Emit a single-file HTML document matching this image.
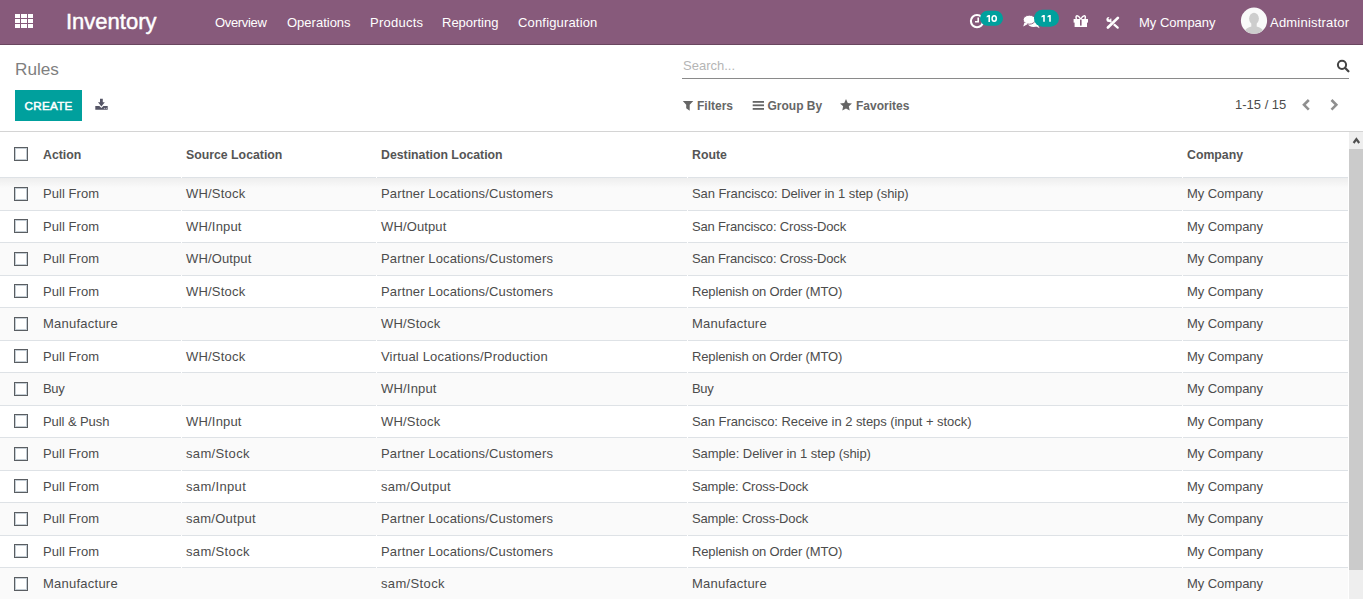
<!DOCTYPE html>
<html><head><meta charset="utf-8">
<style>
*{box-sizing:border-box;margin:0;padding:0}
html,body{width:1363px;height:599px;overflow:hidden;background:#fff}
body{font-family:"Liberation Sans",sans-serif;font-size:13px;color:#4c4c4c;position:relative}
.tx{position:absolute;white-space:nowrap;line-height:1}
.r{position:absolute}
svg{position:absolute;left:0;top:0;overflow:visible}
</style></head><body>
<div class="r" style="left:0;top:0;width:1363px;height:44px;background:#875A7B"></div>
<div class="r" style="left:0;top:44px;width:1363px;height:1px;background:#69465f"></div>
<div class="r" style="left:15px;top:14px;width:5px;height:4px;background:#fff"></div>
<div class="r" style="left:21px;top:14px;width:6px;height:4px;background:#fff"></div>
<div class="r" style="left:28px;top:14px;width:5px;height:4px;background:#fff"></div>
<div class="r" style="left:15px;top:19px;width:5px;height:4px;background:#fff"></div>
<div class="r" style="left:21px;top:19px;width:6px;height:4px;background:#fff"></div>
<div class="r" style="left:28px;top:19px;width:5px;height:4px;background:#fff"></div>
<div class="r" style="left:15px;top:24px;width:5px;height:4px;background:#fff"></div>
<div class="r" style="left:21px;top:24px;width:6px;height:4px;background:#fff"></div>
<div class="r" style="left:28px;top:24px;width:5px;height:4px;background:#fff"></div>
<div class="tx" style="left:66px;top:10.98px;font-size:22px;color:#fff;-webkit-text-stroke:0.45px #fff;">Inventory</div>
<div class="tx" style="left:215px;top:15.80px;font-size:13px;color:#fff;letter-spacing:-0.343px;">Overview</div>
<div class="tx" style="left:287px;top:15.80px;font-size:13px;color:#fff;letter-spacing:0.000px;">Operations</div>
<div class="tx" style="left:370px;top:15.80px;font-size:13px;color:#fff;letter-spacing:0.257px;">Products</div>
<div class="tx" style="left:442px;top:15.80px;font-size:13px;color:#fff;letter-spacing:0.000px;">Reporting</div>
<div class="tx" style="left:518px;top:15.80px;font-size:13px;color:#fff;letter-spacing:0.167px;">Configuration</div>
<div class="tx" style="left:1139px;top:15.80px;font-size:13px;color:#fff;">My Company</div>
<div class="tx" style="left:1270px;top:15.80px;font-size:13px;color:#fff;letter-spacing:0.208px;">Administrator</div>
<svg width="1363" height="599"><circle cx="977" cy="21.1" r="6.1" fill="none" stroke="#fff" stroke-width="2.1"/><path d="M975,21.8 H978.2 V17.4" fill="none" stroke="#fff" stroke-width="1.6"/><rect x="980" y="10.8" width="23" height="15" rx="7.5" fill="#00A09D"/><ellipse cx="1033.6" cy="23.4" rx="5.6" ry="3.7" fill="#fff"/><path d="M1035.2,25.8 L1039.6,28.3 L1037.8,24.6 Z" fill="#fff"/><path d="M1024.6,22.2 L1023.2,26.6 L1028.4,23.8 Z" fill="#fff"/><ellipse cx="1029.3" cy="19.7" rx="6.1" ry="4.5" fill="#fff" stroke="#875A7B" stroke-width="0.9"/><path d="M1024.9,22.6 L1023.9,25.8 L1027.8,23.6 Z" fill="#fff"/><rect x="1034" y="9.8" width="25" height="17" rx="8.5" fill="#00A09D"/><rect x="1073.6" y="19" width="14.4" height="3.6" fill="#fff"/><rect x="1074.6" y="22" width="12.4" height="5" fill="#fff"/><path d="M1080.6,19 C1078,14.2 1075,15 1076.4,19 M1080.8,19 C1083.4,14.2 1086.4,15 1085,19" fill="none" stroke="#fff" stroke-width="1.5"/><rect x="1080" y="19.6" width="1.6" height="6" fill="#875A7B"/><path d="M1110.2,21.2 L1117.7,27.7" stroke="#fff" stroke-width="2.2" stroke-linecap="round"/><circle cx="1108.9" cy="19.5" r="2.5" fill="#fff"/><circle cx="1109.5" cy="18.5" r="1.05" fill="#875A7B"/><circle cx="1110.3" cy="17.4" r="1.1" fill="#875A7B"/><path d="M1109.5,26 L1116.5,19.3" stroke="#875A7B" stroke-width="3.6"/><path d="M1107.9,27.5 L1117.9,17.9" stroke="#fff" stroke-width="2.7" stroke-linecap="round"/><circle cx="1254" cy="20.7" r="13.1" fill="#f9f9f9"/><defs><clipPath id="av"><circle cx="1254" cy="20.7" r="13.1"/></clipPath></defs><g clip-path="url(#av)"><ellipse cx="1254" cy="18.6" rx="4.9" ry="5.9" fill="#cdcdcd"/><rect x="1251.3" y="22" width="5.4" height="5" fill="#cdcdcd"/><path d="M1243,36 C1244,28 1249,26.4 1254,26.4 C1259,26.4 1264,28 1265,36 Z" fill="#cdcdcd"/></g><path d="M100,98.8 H102.8 V102.2 H104.8 L101.4,106.6 L98,102.2 H100 Z" fill="#555566"/><path d="M95.3,105.9 H99.4 L101.4,108 L103.4,105.9 H107.7 V109.7 H95.3 Z" fill="#555566"/><circle cx="104.4" cy="108.3" r="0.6" fill="#c8c8d0"/><circle cx="106.3" cy="108.3" r="0.6" fill="#c8c8d0"/><circle cx="1342" cy="64.8" r="4.1" fill="none" stroke="#444" stroke-width="2"/><path d="M1345.2,68 L1348.4,71.2" stroke="#444" stroke-width="2.3" stroke-linecap="round"/><path d="M682.8,101 L693.3,101 L689.7,104.7 L689.7,110.7 L686.2,108.3 L686.2,104.7 Z" fill="#666"/><rect x="752.7" y="101" width="11.3" height="1.8" fill="#666"/><rect x="752.7" y="104.4" width="11.3" height="1.8" fill="#666"/><rect x="752.7" y="108" width="11.3" height="1.8" fill="#666"/><polygon points="846.00,99.10 847.76,102.97 851.99,103.45 848.85,106.33 849.70,110.50 846.00,108.40 842.30,110.50 843.15,106.33 840.01,103.45 844.24,102.97" fill="#666"/><path d="M1308.8,100 L1304,104.85 L1308.8,109.7" fill="none" stroke="#8f8f8f" stroke-width="2.6"/><path d="M1331.5,100 L1336.3,104.85 L1331.5,109.7" fill="none" stroke="#8f8f8f" stroke-width="2.6"/></svg>
<svg width="1363" height="599"><path d="M988.4,15 h1.6 v7 h-1.6 Z M988.4,15 L986.6999999999999,16.1 v1.3 L988.4,16.7 Z" fill="#fff"/><ellipse cx="994.2" cy="18.5" rx="2.1" ry="2.8" fill="none" stroke="#fff" stroke-width="1.55"/><path d="M1043.2,15 h1.6 v6.800000000000001 h-1.6 Z M1043.2,15 L1041.5,16.1 v1.3 L1043.2,16.7 Z" fill="#fff"/><path d="M1049.2,15 h1.6 v6.800000000000001 h-1.6 Z M1049.2,15 L1047.5,16.1 v1.3 L1049.2,16.7 Z" fill="#fff"/></svg>
<div class="tx" style="left:15px;top:60.74px;font-size:17.2px;color:#7f7f7f;">Rules</div>
<div class="r" style="left:682px;top:78px;width:667px;height:1px;background:#8a8a8a"></div>
<div class="tx" style="left:683px;top:59.00px;font-size:13px;color:#b5b5b5;">Search...</div>
<div class="r" style="left:15px;top:90px;width:67px;height:31px;background:#00A09D"></div>
<div class="tx" style="left:15px;width:67px;text-align:center;top:100.10px;font-size:11.7px;letter-spacing:0.25px;text-indent:0.25px;-webkit-text-stroke:0.5px #fff;color:#fff">CREATE</div>
<div class="tx" style="left:697px;top:99.64px;font-size:12px;color:#666;font-weight:bold;">Filters</div>
<div class="tx" style="left:767.5px;top:99.64px;font-size:12px;color:#666;font-weight:bold;">Group By</div>
<div class="tx" style="left:856px;top:99.64px;font-size:12px;color:#666;font-weight:bold;">Favorites</div>
<div class="tx" style="left:1235px;top:98.30px;font-size:13px;color:#4c4c4c;">1-15 / 15</div>
<div class="r" style="left:0;top:131px;width:1363px;height:1px;background:#d4d4d4"></div>
<div class="r" style="left:14px;top:147px;width:14px;height:14px;border:1.5px solid #5a5e62;box-shadow:inset 0 0 0 1px #c5ced5;background:#fff"></div>
<div class="tx" style="left:43px;top:149.39px;font-size:12.3px;color:#555;font-weight:bold;">Action</div>
<div class="tx" style="left:186px;top:149.39px;font-size:12.3px;color:#555;font-weight:bold;">Source Location</div>
<div class="tx" style="left:381px;top:149.39px;font-size:12.3px;color:#555;font-weight:bold;">Destination Location</div>
<div class="tx" style="left:692px;top:149.39px;font-size:12.3px;color:#555;font-weight:bold;">Route</div>
<div class="tx" style="left:1187px;top:149.39px;font-size:12.3px;color:#555;font-weight:bold;">Company</div>
<div class="r" style="left:0;top:178px;width:1348px;height:32px;background:#fafafa"></div>
<div class="r" style="left:0;top:178px;width:1348px;height:10px;background:linear-gradient(#eeeeee,#fafafa)"></div>
<div class="r" style="left:0;top:177px;width:1348px;height:1px;background:#dee2e6"></div>
<div class="r" style="left:181px;top:177px;width:1px;height:1px;background:#fff"></div>
<div class="r" style="left:376px;top:177px;width:1px;height:1px;background:#fff"></div>
<div class="r" style="left:687px;top:177px;width:1px;height:1px;background:#fff"></div>
<div class="r" style="left:1182px;top:177px;width:1px;height:1px;background:#fff"></div>
<div class="r" style="left:14px;top:187px;width:14px;height:14px;border:1.5px solid #5a5e62;box-shadow:inset 0 0 0 1px #c5ced5;background:#fff"></div>
<div class="tx" style="left:43px;top:186.80px;font-size:13px;letter-spacing:0.062px;">Pull From</div>
<div class="tx" style="left:186px;top:186.80px;font-size:13px;letter-spacing:0.200px;">WH/Stock</div>
<div class="tx" style="left:381px;top:186.80px;font-size:13px;letter-spacing:0.138px;">Partner Locations/Customers</div>
<div class="tx" style="left:692px;top:186.80px;font-size:13px;letter-spacing:-0.079px;">San Francisco: Deliver in 1 step (ship)</div>
<div class="tx" style="left:1187px;top:186.80px;font-size:13px;letter-spacing:-0.067px;">My Company</div>
<div class="r" style="left:0;top:210px;width:1348px;height:1px;background:#dee2e6"></div>
<div class="r" style="left:181px;top:210px;width:1px;height:1px;background:#fff"></div>
<div class="r" style="left:376px;top:210px;width:1px;height:1px;background:#fff"></div>
<div class="r" style="left:687px;top:210px;width:1px;height:1px;background:#fff"></div>
<div class="r" style="left:1182px;top:210px;width:1px;height:1px;background:#fff"></div>
<div class="r" style="left:14px;top:219px;width:14px;height:14px;border:1.5px solid #5a5e62;box-shadow:inset 0 0 0 1px #c5ced5;background:#fff"></div>
<div class="tx" style="left:43px;top:219.80px;font-size:13px;letter-spacing:0.062px;">Pull From</div>
<div class="tx" style="left:186px;top:219.80px;font-size:13px;letter-spacing:0.186px;">WH/Input</div>
<div class="tx" style="left:381px;top:219.80px;font-size:13px;letter-spacing:0.125px;">WH/Output</div>
<div class="tx" style="left:692px;top:219.80px;font-size:13px;letter-spacing:-0.167px;">San Francisco: Cross-Dock</div>
<div class="tx" style="left:1187px;top:219.80px;font-size:13px;letter-spacing:-0.067px;">My Company</div>
<div class="r" style="left:0;top:243px;width:1348px;height:32px;background:#fafafa"></div>
<div class="r" style="left:0;top:242px;width:1348px;height:1px;background:#dee2e6"></div>
<div class="r" style="left:181px;top:242px;width:1px;height:1px;background:#fff"></div>
<div class="r" style="left:376px;top:242px;width:1px;height:1px;background:#fff"></div>
<div class="r" style="left:687px;top:242px;width:1px;height:1px;background:#fff"></div>
<div class="r" style="left:1182px;top:242px;width:1px;height:1px;background:#fff"></div>
<div class="r" style="left:14px;top:252px;width:14px;height:14px;border:1.5px solid #5a5e62;box-shadow:inset 0 0 0 1px #c5ced5;background:#fff"></div>
<div class="tx" style="left:43px;top:251.80px;font-size:13px;letter-spacing:0.062px;">Pull From</div>
<div class="tx" style="left:186px;top:251.80px;font-size:13px;letter-spacing:0.125px;">WH/Output</div>
<div class="tx" style="left:381px;top:251.80px;font-size:13px;letter-spacing:0.138px;">Partner Locations/Customers</div>
<div class="tx" style="left:692px;top:251.80px;font-size:13px;letter-spacing:-0.167px;">San Francisco: Cross-Dock</div>
<div class="tx" style="left:1187px;top:251.80px;font-size:13px;letter-spacing:-0.067px;">My Company</div>
<div class="r" style="left:0;top:275px;width:1348px;height:1px;background:#dee2e6"></div>
<div class="r" style="left:181px;top:275px;width:1px;height:1px;background:#fff"></div>
<div class="r" style="left:376px;top:275px;width:1px;height:1px;background:#fff"></div>
<div class="r" style="left:687px;top:275px;width:1px;height:1px;background:#fff"></div>
<div class="r" style="left:1182px;top:275px;width:1px;height:1px;background:#fff"></div>
<div class="r" style="left:14px;top:284px;width:14px;height:14px;border:1.5px solid #5a5e62;box-shadow:inset 0 0 0 1px #c5ced5;background:#fff"></div>
<div class="tx" style="left:43px;top:284.80px;font-size:13px;letter-spacing:0.062px;">Pull From</div>
<div class="tx" style="left:186px;top:284.80px;font-size:13px;letter-spacing:0.200px;">WH/Stock</div>
<div class="tx" style="left:381px;top:284.80px;font-size:13px;letter-spacing:0.138px;">Partner Locations/Customers</div>
<div class="tx" style="left:692px;top:284.80px;font-size:13px;letter-spacing:-0.148px;">Replenish on Order (MTO)</div>
<div class="tx" style="left:1187px;top:284.80px;font-size:13px;letter-spacing:-0.067px;">My Company</div>
<div class="r" style="left:0;top:308px;width:1348px;height:32px;background:#fafafa"></div>
<div class="r" style="left:0;top:307px;width:1348px;height:1px;background:#dee2e6"></div>
<div class="r" style="left:181px;top:307px;width:1px;height:1px;background:#fff"></div>
<div class="r" style="left:376px;top:307px;width:1px;height:1px;background:#fff"></div>
<div class="r" style="left:687px;top:307px;width:1px;height:1px;background:#fff"></div>
<div class="r" style="left:1182px;top:307px;width:1px;height:1px;background:#fff"></div>
<div class="r" style="left:14px;top:317px;width:14px;height:14px;border:1.5px solid #5a5e62;box-shadow:inset 0 0 0 1px #c5ced5;background:#fff"></div>
<div class="tx" style="left:43px;top:316.80px;font-size:13px;letter-spacing:0.240px;">Manufacture</div>
<div class="tx" style="left:381px;top:316.80px;font-size:13px;letter-spacing:0.200px;">WH/Stock</div>
<div class="tx" style="left:692px;top:316.80px;font-size:13px;letter-spacing:0.240px;">Manufacture</div>
<div class="tx" style="left:1187px;top:316.80px;font-size:13px;letter-spacing:-0.067px;">My Company</div>
<div class="r" style="left:0;top:340px;width:1348px;height:1px;background:#dee2e6"></div>
<div class="r" style="left:181px;top:340px;width:1px;height:1px;background:#fff"></div>
<div class="r" style="left:376px;top:340px;width:1px;height:1px;background:#fff"></div>
<div class="r" style="left:687px;top:340px;width:1px;height:1px;background:#fff"></div>
<div class="r" style="left:1182px;top:340px;width:1px;height:1px;background:#fff"></div>
<div class="r" style="left:14px;top:349px;width:14px;height:14px;border:1.5px solid #5a5e62;box-shadow:inset 0 0 0 1px #c5ced5;background:#fff"></div>
<div class="tx" style="left:43px;top:349.80px;font-size:13px;letter-spacing:0.062px;">Pull From</div>
<div class="tx" style="left:186px;top:349.80px;font-size:13px;letter-spacing:0.200px;">WH/Stock</div>
<div class="tx" style="left:381px;top:349.80px;font-size:13px;letter-spacing:0.185px;">Virtual Locations/Production</div>
<div class="tx" style="left:692px;top:349.80px;font-size:13px;letter-spacing:-0.148px;">Replenish on Order (MTO)</div>
<div class="tx" style="left:1187px;top:349.80px;font-size:13px;letter-spacing:-0.067px;">My Company</div>
<div class="r" style="left:0;top:373px;width:1348px;height:32px;background:#fafafa"></div>
<div class="r" style="left:0;top:372px;width:1348px;height:1px;background:#dee2e6"></div>
<div class="r" style="left:181px;top:372px;width:1px;height:1px;background:#fff"></div>
<div class="r" style="left:376px;top:372px;width:1px;height:1px;background:#fff"></div>
<div class="r" style="left:687px;top:372px;width:1px;height:1px;background:#fff"></div>
<div class="r" style="left:1182px;top:372px;width:1px;height:1px;background:#fff"></div>
<div class="r" style="left:14px;top:382px;width:14px;height:14px;border:1.5px solid #5a5e62;box-shadow:inset 0 0 0 1px #c5ced5;background:#fff"></div>
<div class="tx" style="left:43px;top:381.80px;font-size:13px;letter-spacing:-0.350px;">Buy</div>
<div class="tx" style="left:381px;top:381.80px;font-size:13px;letter-spacing:0.186px;">WH/Input</div>
<div class="tx" style="left:692px;top:381.80px;font-size:13px;letter-spacing:-0.350px;">Buy</div>
<div class="tx" style="left:1187px;top:381.80px;font-size:13px;letter-spacing:-0.067px;">My Company</div>
<div class="r" style="left:0;top:405px;width:1348px;height:1px;background:#dee2e6"></div>
<div class="r" style="left:181px;top:405px;width:1px;height:1px;background:#fff"></div>
<div class="r" style="left:376px;top:405px;width:1px;height:1px;background:#fff"></div>
<div class="r" style="left:687px;top:405px;width:1px;height:1px;background:#fff"></div>
<div class="r" style="left:1182px;top:405px;width:1px;height:1px;background:#fff"></div>
<div class="r" style="left:14px;top:414px;width:14px;height:14px;border:1.5px solid #5a5e62;box-shadow:inset 0 0 0 1px #c5ced5;background:#fff"></div>
<div class="tx" style="left:43px;top:414.80px;font-size:13px;letter-spacing:-0.080px;">Pull &amp; Push</div>
<div class="tx" style="left:186px;top:414.80px;font-size:13px;letter-spacing:0.186px;">WH/Input</div>
<div class="tx" style="left:381px;top:414.80px;font-size:13px;letter-spacing:0.200px;">WH/Stock</div>
<div class="tx" style="left:692px;top:414.80px;font-size:13px;letter-spacing:-0.056px;">San Francisco: Receive in 2 steps (input + stock)</div>
<div class="tx" style="left:1187px;top:414.80px;font-size:13px;letter-spacing:-0.067px;">My Company</div>
<div class="r" style="left:0;top:438px;width:1348px;height:32px;background:#fafafa"></div>
<div class="r" style="left:0;top:437px;width:1348px;height:1px;background:#dee2e6"></div>
<div class="r" style="left:181px;top:437px;width:1px;height:1px;background:#fff"></div>
<div class="r" style="left:376px;top:437px;width:1px;height:1px;background:#fff"></div>
<div class="r" style="left:687px;top:437px;width:1px;height:1px;background:#fff"></div>
<div class="r" style="left:1182px;top:437px;width:1px;height:1px;background:#fff"></div>
<div class="r" style="left:14px;top:447px;width:14px;height:14px;border:1.5px solid #5a5e62;box-shadow:inset 0 0 0 1px #c5ced5;background:#fff"></div>
<div class="tx" style="left:43px;top:446.80px;font-size:13px;letter-spacing:0.062px;">Pull From</div>
<div class="tx" style="left:186px;top:446.80px;font-size:13px;letter-spacing:0.350px;">sam/Stock</div>
<div class="tx" style="left:381px;top:446.80px;font-size:13px;letter-spacing:0.138px;">Partner Locations/Customers</div>
<div class="tx" style="left:692px;top:446.80px;font-size:13px;letter-spacing:-0.055px;">Sample: Deliver in 1 step (ship)</div>
<div class="tx" style="left:1187px;top:446.80px;font-size:13px;letter-spacing:-0.067px;">My Company</div>
<div class="r" style="left:0;top:470px;width:1348px;height:1px;background:#dee2e6"></div>
<div class="r" style="left:181px;top:470px;width:1px;height:1px;background:#fff"></div>
<div class="r" style="left:376px;top:470px;width:1px;height:1px;background:#fff"></div>
<div class="r" style="left:687px;top:470px;width:1px;height:1px;background:#fff"></div>
<div class="r" style="left:1182px;top:470px;width:1px;height:1px;background:#fff"></div>
<div class="r" style="left:14px;top:479px;width:14px;height:14px;border:1.5px solid #5a5e62;box-shadow:inset 0 0 0 1px #c5ced5;background:#fff"></div>
<div class="tx" style="left:43px;top:479.80px;font-size:13px;letter-spacing:0.062px;">Pull From</div>
<div class="tx" style="left:186px;top:479.80px;font-size:13px;letter-spacing:0.338px;">sam/Input</div>
<div class="tx" style="left:381px;top:479.80px;font-size:13px;letter-spacing:0.256px;">sam/Output</div>
<div class="tx" style="left:692px;top:479.80px;font-size:13px;letter-spacing:-0.176px;">Sample: Cross-Dock</div>
<div class="tx" style="left:1187px;top:479.80px;font-size:13px;letter-spacing:-0.067px;">My Company</div>
<div class="r" style="left:0;top:503px;width:1348px;height:32px;background:#fafafa"></div>
<div class="r" style="left:0;top:502px;width:1348px;height:1px;background:#dee2e6"></div>
<div class="r" style="left:181px;top:502px;width:1px;height:1px;background:#fff"></div>
<div class="r" style="left:376px;top:502px;width:1px;height:1px;background:#fff"></div>
<div class="r" style="left:687px;top:502px;width:1px;height:1px;background:#fff"></div>
<div class="r" style="left:1182px;top:502px;width:1px;height:1px;background:#fff"></div>
<div class="r" style="left:14px;top:512px;width:14px;height:14px;border:1.5px solid #5a5e62;box-shadow:inset 0 0 0 1px #c5ced5;background:#fff"></div>
<div class="tx" style="left:43px;top:511.80px;font-size:13px;letter-spacing:0.062px;">Pull From</div>
<div class="tx" style="left:186px;top:511.80px;font-size:13px;letter-spacing:0.256px;">sam/Output</div>
<div class="tx" style="left:381px;top:511.80px;font-size:13px;letter-spacing:0.138px;">Partner Locations/Customers</div>
<div class="tx" style="left:692px;top:511.80px;font-size:13px;letter-spacing:-0.176px;">Sample: Cross-Dock</div>
<div class="tx" style="left:1187px;top:511.80px;font-size:13px;letter-spacing:-0.067px;">My Company</div>
<div class="r" style="left:0;top:535px;width:1348px;height:1px;background:#dee2e6"></div>
<div class="r" style="left:181px;top:535px;width:1px;height:1px;background:#fff"></div>
<div class="r" style="left:376px;top:535px;width:1px;height:1px;background:#fff"></div>
<div class="r" style="left:687px;top:535px;width:1px;height:1px;background:#fff"></div>
<div class="r" style="left:1182px;top:535px;width:1px;height:1px;background:#fff"></div>
<div class="r" style="left:14px;top:544px;width:14px;height:14px;border:1.5px solid #5a5e62;box-shadow:inset 0 0 0 1px #c5ced5;background:#fff"></div>
<div class="tx" style="left:43px;top:544.80px;font-size:13px;letter-spacing:0.062px;">Pull From</div>
<div class="tx" style="left:186px;top:544.80px;font-size:13px;letter-spacing:0.350px;">sam/Stock</div>
<div class="tx" style="left:381px;top:544.80px;font-size:13px;letter-spacing:0.138px;">Partner Locations/Customers</div>
<div class="tx" style="left:692px;top:544.80px;font-size:13px;letter-spacing:-0.148px;">Replenish on Order (MTO)</div>
<div class="tx" style="left:1187px;top:544.80px;font-size:13px;letter-spacing:-0.067px;">My Company</div>
<div class="r" style="left:0;top:568px;width:1348px;height:32px;background:#fafafa"></div>
<div class="r" style="left:0;top:567px;width:1348px;height:1px;background:#dee2e6"></div>
<div class="r" style="left:181px;top:567px;width:1px;height:1px;background:#fff"></div>
<div class="r" style="left:376px;top:567px;width:1px;height:1px;background:#fff"></div>
<div class="r" style="left:687px;top:567px;width:1px;height:1px;background:#fff"></div>
<div class="r" style="left:1182px;top:567px;width:1px;height:1px;background:#fff"></div>
<div class="r" style="left:14px;top:577px;width:14px;height:14px;border:1.5px solid #5a5e62;box-shadow:inset 0 0 0 1px #c5ced5;background:#fff"></div>
<div class="tx" style="left:43px;top:576.80px;font-size:13px;letter-spacing:0.240px;">Manufacture</div>
<div class="tx" style="left:381px;top:576.80px;font-size:13px;letter-spacing:0.350px;">sam/Stock</div>
<div class="tx" style="left:692px;top:576.80px;font-size:13px;letter-spacing:0.240px;">Manufacture</div>
<div class="tx" style="left:1187px;top:576.80px;font-size:13px;letter-spacing:-0.067px;">My Company</div>
<div class="r" style="left:0;top:600px;width:1348px;height:1px;background:#dee2e6"></div>
<div class="r" style="left:181px;top:600px;width:1px;height:1px;background:#fff"></div>
<div class="r" style="left:376px;top:600px;width:1px;height:1px;background:#fff"></div>
<div class="r" style="left:687px;top:600px;width:1px;height:1px;background:#fff"></div>
<div class="r" style="left:1182px;top:600px;width:1px;height:1px;background:#fff"></div>
<div class="r" style="left:14px;top:609px;width:14px;height:14px;border:1.5px solid #5a5e62;box-shadow:inset 0 0 0 1px #c5ced5;background:#fff"></div>
<div class="tx" style="left:43px;top:609.80px;font-size:13px;letter-spacing:0.062px;">Pull From</div>
<div class="tx" style="left:186px;top:609.80px;font-size:13px;letter-spacing:0.350px;">sam/Stock</div>
<div class="tx" style="left:381px;top:609.80px;font-size:13px;letter-spacing:0.138px;">Partner Locations/Customers</div>
<div class="tx" style="left:692px;top:609.80px;font-size:13px;letter-spacing:-0.148px;">Replenish on Order (MTO)</div>
<div class="tx" style="left:1187px;top:609.80px;font-size:13px;letter-spacing:-0.067px;">My Company</div>
<div class="r" style="left:1349px;top:132px;width:14px;height:467px;background:#eeeeee"></div>
<div class="r" style="left:1349px;top:149px;width:14px;height:421px;background:#cbcbcb"></div>
<svg width="1363" height="599"><path d="M1353.6,143 L1356.4,139.2 L1359.2,143" fill="none" stroke="#505050" stroke-width="2.2"/></svg>
</body></html>
